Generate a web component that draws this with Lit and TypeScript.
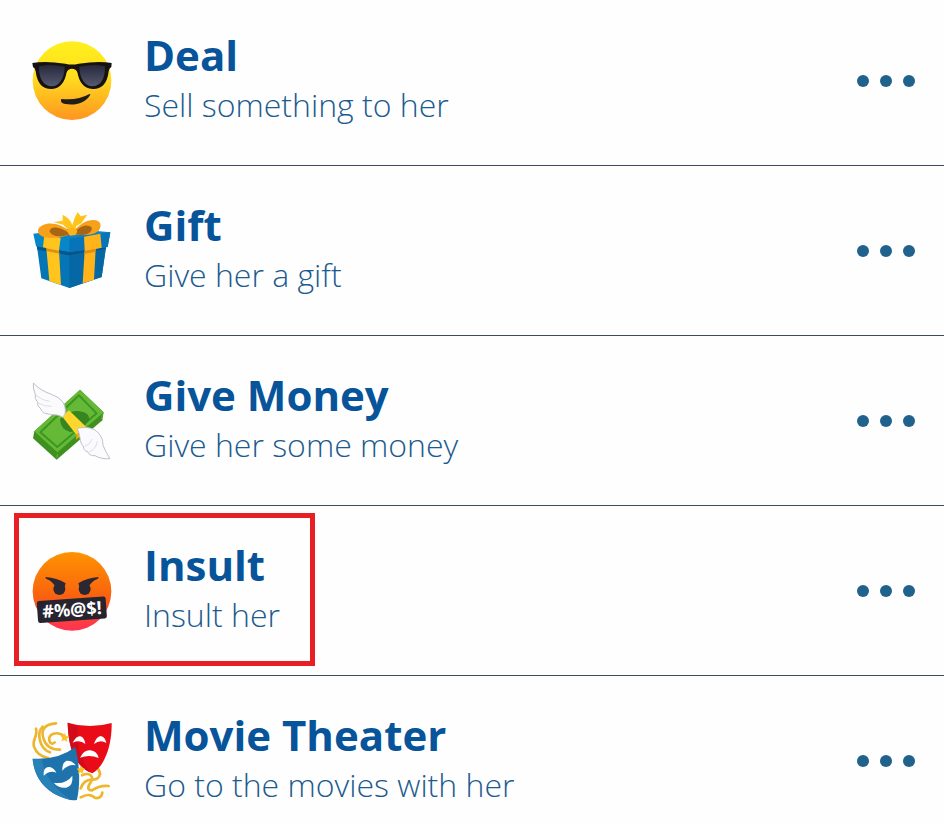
import { LitElement, html, svg, css, nothing, type TemplateResult } from "lit";
import { customElement, property } from "lit/decorators.js";

const deal = svg`
  <defs>
    <linearGradient id="face" x1="0" y1="0" x2="0" y2="1">
      <stop offset="0" stop-color="#fff01c"/><stop offset="0.45" stop-color="#ffdd1f"/><stop offset="1" stop-color="#ff9420"/>
    </linearGradient>
    <linearGradient id="lens" x1="0" y1="0" x2="0" y2="1">
      <stop offset="0" stop-color="#26283a"/><stop offset="1" stop-color="#565970"/>
    </linearGradient>
  </defs>
  <circle cx="150" cy="152" r="118" fill="url(#face)"/>
  <path d="M31 99 Q70 92 130 101 Q150 106 170 101 Q230 92 269 99 L268 111 Q262 114 260 124 C256 164 236 178 212 177 C184 176 172 156 166 127 Q162 116 150 116 Q138 116 134 127 C128 156 116 176 90 177 C64 178 46 164 41 124 Q39 114 33 111 Z" fill="#15120f"/>
  <path d="M51 109 Q88 101 128 110 C128 142 112 169 90 169 C64 169 50 146 51 109 Z" fill="url(#lens)"/>
  <path d="M249 109 Q212 101 172 110 C172 142 188 169 211 169 C236 169 250 146 249 109 Z" fill="url(#lens)"/>
  <path d="M118 207 Q167 212 201 193 Q208 190 203 197 C190 218 162 227 130 222 Q115 219 117 210 Z" fill="#221d16"/>`;

const gift = svg`
  <path d="M44 133 L141 155 L253 134 L239 231 L142 264 L58 235 Z" fill="#0675b5"/>
  <path d="M142 155 L253 134 L239 231 L142 264 Z" fill="#0667a5"/>
  <path d="M44 138 L141 154 L252 134 L251 146 L142 166 L46 149 Z" fill="#075489"/>
  <path d="M34 101 L150 86 L265 97 L257 141 L142 156 L42 139 Z" fill="#0787c9"/>
  <path d="M142 116 L265 97 L257 141 L142 156 Z" fill="#0874b7"/>
  <path d="M67 104 L116 113 L111 151 L117 255 L82 243 L73 144 L63 142 Z" fill="#ffc51d"/>
  <path d="M186 110 L235 101 L239 143 L221 147 L216 239 L182 250 L188 151 Z" fill="#ffb51a"/>
  <path d="M73 145 L111 152 L112 161 L74 153 Z M188 152 L222 146 L220 155 L187 162 Z" fill="#e18c13"/>
  <path d="M149 100 C111 60 57 65 48 90 C43 113 92 124 149 101 Z" fill="#f7a11b"/>
  <path d="M151 100 C177 58 227 50 235 71 C240 96 211 113 151 101 Z" fill="#f7a11b"/>
  <path d="M146 101 C111 78 84 77 83 94 C89 112 118 113 146 101 Z" fill="#a96513"/>
  <path d="M155 99 C178 74 201 71 210 85 C207 105 179 111 155 99 Z" fill="#a96513"/>
  <path d="M145 95 L123 74 L94 66 L122 62 L122 44 Q144 54 151 75 Q157 51 167 36 L176 49 L196 44 L178 70 L162 79 L161 97 Z" fill="#ffc51c"/>
  <path d="M135 94 Q149 71 166 94 L161 105 L144 107 Z" fill="#ffb31a"/>`;

const money = svg`
  <path d="M174 59 L245 127 L241 151 L104 269 L33 205 L37 184 Z" fill="#3f911f"/>
  <path d="M174 59 L245 127 L106 247 L37 184 Z" fill="#65b936"/>
  <path d="M171 76 L224 130 L106 231 L55 187 Z" fill="none" stroke="#399722" stroke-width="6" stroke-linejoin="round"/>
  <path d="M114 147 Q147 118 173 124 Q203 128 202 149 Q178 185 145 186 Q116 180 114 147 Z" fill="#36851f"/>
  <path d="M120 139 L141 121 L192 170 L163 194 Z" fill="#ffd62b"/>
  <path d="M163 194 L192 170 L185 190 L162 209 Z" fill="#edab18"/>
  <path d="M241 133 L239 148 M106 252 L105 263" stroke="#82c34e" stroke-width="2"/>
  <g fill="#fbfafc" stroke="#bfc0ca" stroke-width="3" stroke-linejoin="round">
    <path d="M129 133 C134 105 122 86 88 73 Q54 61 34 39 Q32 57 40 73 Q37 86 47 97 Q44 108 56 116 Q61 132 80 132 C94 137 107 131 122 142 Z"/>
    <path d="M165 175 C192 170 215 172 229 189 Q243 204 243 226 Q252 248 264 266 Q237 268 219 257 Q202 258 198 246 Q184 242 184 229 C171 217 177 195 165 175 Z"/>
  </g>
  <path d="M42 76 Q61 92 83 94 M49 99 Q66 110 89 109 M187 230 Q204 224 211 207 M200 247 Q222 238 226 214" fill="none" stroke="#dedee5" stroke-width="3"/>`;

const insult = svg`
  <defs>
    <linearGradient id="rage" x1="0" y1="0" x2="0" y2="1">
      <stop offset="0" stop-color="#ff9300"/><stop offset="0.55" stop-color="#f9630f"/><stop offset="1" stop-color="#ff3155"/>
    </linearGradient>
  </defs>
  <circle cx="150" cy="154" r="118" fill="url(#rage)"/>
  <g fill="#2b2833">
    <circle cx="112" cy="147" r="18"/><circle cx="188" cy="147" r="18"/>
    <path d="M70 111 Q105 113 131 130 L126 147 L101 143 Q94 124 72 116 Z"/>
    <path d="M230 111 Q195 113 169 130 L174 147 L199 143 Q206 124 228 116 Z"/>
  </g>
  <g transform="rotate(-4 150 209)">
    <rect x="46" y="176" width="207" height="66" rx="7" fill="#272430"/>
    <text x="150" y="228" text-anchor="middle" class="censor">#%@$!</text>
  </g>`;

const theater = svg`
  <g fill="none" stroke="#edb62e" stroke-width="8" stroke-linecap="round">
    <path d="M42 56 C49 79 29 88 36 110 Q46 139 79 144"/>
    <path d="M102 40 C68 42 56 60 64 84 Q73 119 114 119"/>
    <path d="M128 79 C105 61 78 72 82 92 Q88 107 98 97"/>
    <path d="M62 50 C43 69 52 116 84 127"/>
    <path d="M220 167 C245 191 232 209 209 209 Q185 210 176 235"/>
    <path d="M180 196 C207 184 216 203 206 217 Q190 240 210 241 Q233 225 260 228"/>
    <path d="M176 262 Q202 247 220 264 Q238 266 241 248"/>
  </g>
  <path d="M137 38 Q202 58 269 39 C270 102 251 166 211 190 C173 177 139 132 137 38 Z" fill="#ea0b18"/>
  <path d="M137 38 Q151 48 168 47 Q158 121 203 186 C164 169 139 124 137 38 Z" fill="#d10b19"/>
  <g fill="#fff">
    <path d="M152 98 Q164 76 175 79 Q187 82 190 102 Q174 88 152 98 Z"/>
    <path d="M216 102 Q223 80 236 78 Q249 80 253 99 Q235 87 216 102 Z"/>
    <path d="M174 143 Q186 119 205 121 Q225 123 230 144 Q203 132 174 143 Z"/>
  </g>
  <path d="M32 146 Q108 151 159 112 C171 149 177 216 165 269 Q154 274 132 266 C73 250 36 200 32 146 Z" fill="#1e73ad"/>
  <path d="M32 146 Q45 149 59 147 Q70 218 146 269 C76 254 36 208 32 146 Z" fill="#2882b8"/>
  <g fill="#fff">
    <path d="M65 197 Q63 173 79 171 Q95 171 103 188 Q83 180 65 197 Z"/>
    <path d="M121 182 Q120 158 134 152 Q151 151 161 166 Q139 162 121 182 Z"/>
    <path d="M95 218 Q131 224 151 197 Q154 228 133 233 Q110 236 95 218 Z"/>
  </g>
  <path d="M128 69 L132 78 L142 80 L134 86 L136 96 L127 90 L118 94 L121 84 L115 76 L125 77 Z" fill="#ffc224"/>
  <path d="M176 166 L180 174 L189 176 L183 183 L184 191 L176 187 L168 191 L170 182 L164 176 L173 174 Z" fill="#ffc224"/>`;

interface Activity {
  title: string;
  note: string;
  icon: TemplateResult<2>;
  marked?: boolean;
}

const activities: Activity[] = [
  { title: "Deal", note: "Sell something to her", icon: deal },
  { title: "Gift", note: "Give her a gift", icon: gift },
  { title: "Give Money", note: "Give her some money", icon: money },
  { title: "Insult", note: "Insult her", icon: insult, marked: true },
  { title: "Movie Theater", note: "Go to the movies with her", icon: theater },
];

@customElement("activity-row")
export class ActivityRow extends LitElement {
  @property({ attribute: false }) item!: Activity;

  static styles = css`
    :host {
      display: flex;
      align-items: center;
      position: relative;
      box-sizing: border-box;
      padding: 0 24px 0 32px;
    }
    .icon {
      width: 80px;
      height: 80px;
      flex: none;
      overflow: visible;
    }
    .censor {
      font: 700 54px "Noto Sans", sans-serif;
      fill: #fff;
    }
    .text {
      flex: 1;
      min-width: 0;
      margin-left: 32px;
      padding-bottom: 2px;
    }
    .title,
    .note {
      margin: 0;
      line-height: 50px;
    }
    .title {
      font-size: 42px;
      font-weight: 700;
      color: #07549a;
    }
    .note {
      font-size: 32px;
      font-weight: 300;
      color: #1c5b8f;
    }
    .more {
      display: flex;
      gap: 11px;
      padding: 16px 5px;
      border: 0;
      background: none;
      cursor: pointer;
    }
    .dot {
      width: 12px;
      height: 12px;
      border-radius: 50%;
      background: #20628c;
    }
    .mark {
      position: absolute;
      left: 14px;
      top: 7px;
      bottom: 9px;
      width: 301px;
      box-sizing: border-box;
      border: 5px solid #e81e25;
      pointer-events: none;
    }
  `;

  render() {
    const { title, note, icon, marked } = this.item;
    return html`
      <svg class="icon" viewBox="30 33 240 240" aria-hidden="true">${icon}</svg>
      <div class="text">
        <h2 class="title">${title}</h2>
        <p class="note">${note}</p>
      </div>
      <button class="more" type="button" aria-label="More options for ${title}">
        <span class="dot"></span><span class="dot"></span><span class="dot"></span>
      </button>
      ${marked ? html`<div class="mark"></div>` : nothing}
    `;
  }
}

@customElement("app-root")
export class AppRoot extends LitElement {
  static styles = css`
    :host {
      display: block;
      background: #fefefe;
      font-family: "Open Sans", "Noto Sans", sans-serif;
    }
    .list {
      display: flex;
      flex-direction: column;
    }
    .row {
      height: 170px;
      border-bottom: 1px solid #3c4b62;
    }
    .row:first-child {
      height: 166px;
      padding-bottom: 4px;
    }
    .row:last-child {
      height: 149px;
      padding-top: 21px;
      border-bottom: 0;
    }
  `;

  render() {
    return html`
      <main class="list">
        ${activities.map((a) => html`<activity-row class="row" .item=${a}></activity-row>`)}
      </main>
    `;
  }
}
